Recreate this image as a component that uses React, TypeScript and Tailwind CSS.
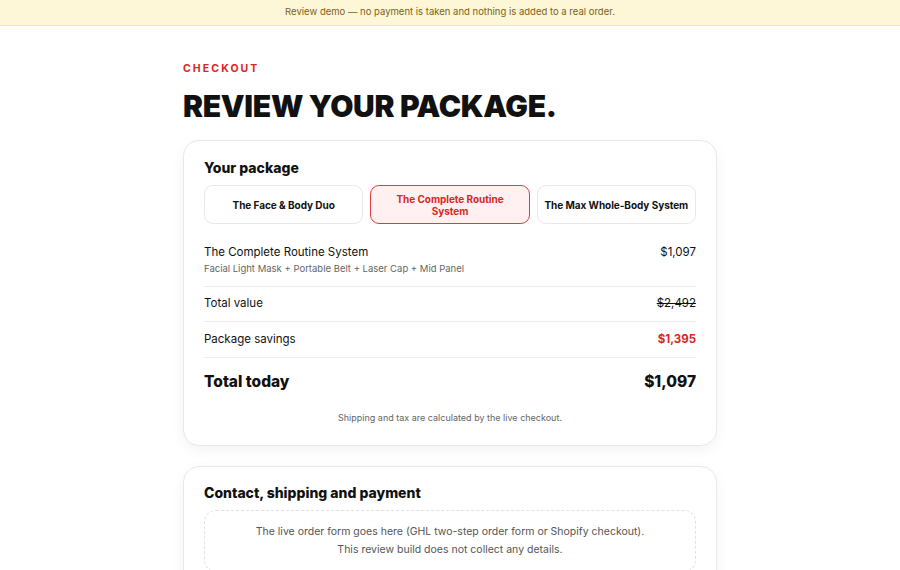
const packages = [
  { id: "duo", label: "The Face & Body Duo" },
  { id: "complete", label: "The Complete Routine System" },
  { id: "max", label: "The Max Whole-Body System" },
];

const display = "font-['Inter','Noto_Sans',sans-serif]";
const body = "font-['Inter','Liberation_Sans',sans-serif]";

export default function App() {
  const selected = "complete";

  return (
    <div className={`min-h-screen bg-white text-[#111] ${body}`}>
      <div className="flex h-[26px] items-center justify-center border-b border-[#f3e7b3] bg-[#fef7d7] text-[9.5px] text-[#7d6118]">
        Review demo — no payment is taken and nothing is added to a real order.
      </div>

      <div className="mx-auto w-[534px] pb-10 pt-[36px]">
        <p className={`${display} text-[10.5px] font-bold leading-[14px] tracking-[0.2em] text-[#dc2626]`}>CHECKOUT</p>
        <h1 className={`${display} mt-[12px] text-[30px] font-black leading-[36px] tracking-[-0.01em]`}>
          REVIEW YOUR PACKAGE.
        </h1>

        <div className="mt-[16px] rounded-2xl border border-[#e8e8e8] bg-white px-5 pb-[20px] pt-[18px] shadow-[0_4px_14px_rgba(0,0,0,0.05)]">
          <h2 className={`${display} text-[14px] font-extrabold leading-[18px]`}>Your package</h2>
          <div className="mt-[8px] grid grid-cols-3 gap-[7px]">
            {packages.map((p) => {
              const active = p.id === selected;
              return (
                <button
                  key={p.id}
                  type="button"
                  className={`${display} flex h-[39px] items-center justify-center rounded-[9px] border px-[14px] text-center text-[10px] font-bold leading-[12px] tracking-[-0.005em] ${
                    active
                      ? "border-[#e23b3b] bg-[#fff1f1] text-[#dc2626]"
                      : "border-[#e8e8e8] bg-white text-[#111]"
                  }`}
                >
                  <span className={p.id === "max" ? "whitespace-nowrap" : "whitespace-normal"}>{p.label}</span>
                </button>
              );
            })}
          </div>

          <div className="mt-[20px] flex items-start justify-between pb-[10px]">
            <div>
              <p className="text-[11.5px] leading-[16px]">The Complete Routine System</p>
              <p className="mt-[2px] text-[9.5px] leading-[14px] text-[#666]">
                Facial Light Mask + Portable Belt + Laser Cap + Mid Panel
              </p>
            </div>
            <p className="text-[11.5px] leading-[16px]">$1,097</p>
          </div>

          <div className="flex items-center justify-between border-t border-[#ececec] pb-[10px] pt-[8px] text-[11.5px] leading-[16px]">
            <span>Total value</span>
            <span className="line-through">$2,492</span>
          </div>
          <div className="flex items-center justify-between border-t border-[#ececec] pb-[10px] pt-[9px] text-[11.5px] leading-[16px]">
            <span>Package savings</span>
            <span className="font-bold text-[#dc2626]">$1,395</span>
          </div>
          <div className={`${display} flex items-center justify-between border-t border-[#ececec] pb-[14px] pt-[14px] text-[15.5px] font-extrabold leading-[20px]`}>
            <span>Total today</span>
            <span>$1,097</span>
          </div>

          <p className="mt-[5px] text-center text-[9px] leading-[14px] text-[#666]">
            Shipping and tax are calculated by the live checkout.
          </p>
        </div>

        <div className="mt-[20px] rounded-2xl border border-[#e8e8e8] bg-white px-5 pb-5 pt-[17px] shadow-[0_4px_14px_rgba(0,0,0,0.05)]">
          <h2 className={`${display} text-[14px] font-extrabold leading-[18px]`}>Contact, shipping and payment</h2>
          <div className="mt-[8px] rounded-xl border border-dashed border-[#e2e2e2] px-4 py-[12px] text-center text-[10.5px] leading-[18px] text-[#555]">
            <p>The live order form goes here (GHL two-step order form or Shopify checkout).</p>
            <p>This review build does not collect any details.</p>
          </div>
        </div>
      </div>
    </div>
  );
}
